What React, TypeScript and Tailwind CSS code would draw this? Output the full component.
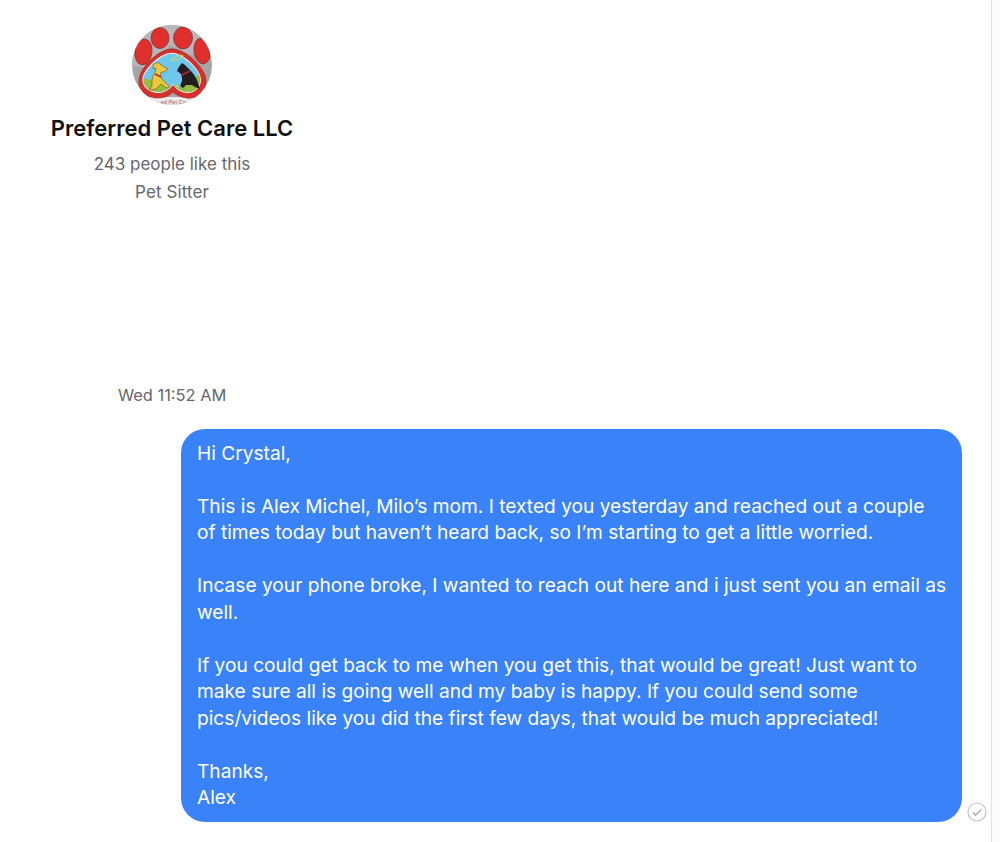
const PawLogo = () => (
  <svg viewBox="0 0 80 80" className="w-20 h-20 block">
    <defs>
      <clipPath id="logoClip">
        <circle cx="40" cy="40" r="40" />
      </clipPath>
      <clipPath id="heartClip">
        <path d="M38 29C48 27 63 41 67 50C71 60 63 68 54 67C48 66 44 63 41 59C38 63 33 67 27 67C17 67 9 60 12 51C16 42 29 30 38 29Z" />
      </clipPath>
    </defs>
    <g clipPath="url(#logoClip)">
      <rect width="80" height="80" fill="#a5a5a7" />
      <path d="M0 0H80V24L58 30L38 20L16 44L0 40Z" fill="#b7b7b9" />
      <rect y="72" width="80" height="8" fill="#eeeaea" />
      <g fill="#e0302e" stroke="#7d3030" strokeWidth="0.7">
        <ellipse cx="11.5" cy="27" rx="8.5" ry="13" transform="rotate(8 11.5 27)" />
        <ellipse cx="28" cy="13" rx="9" ry="10.5" />
        <ellipse cx="51" cy="13" rx="9.5" ry="11" />
        <ellipse cx="70" cy="26" rx="8" ry="13" transform="rotate(-8 70 26)" />
      </g>
      <path d="M38 24C50 22 68 38 73 50C78 65 65 75 54 73C48 72 44 70 41 67C38 70 33 73 27 73C15 74 3 64 8 50C12 39 27 25 38 24Z" fill="#d72f2b" stroke="#8f2a28" strokeWidth="0.5" />
      <path d="M38 28C48 26 64 40 68 50C72 61 63 69 54 68C48 67 44 64 41 60C38 64 33 68 27 68C17 68 8 61 11 51C15 41 28 29 38 28Z" fill="#f3efe4" />
      <g clipPath="url(#heartClip)">
        <rect width="80" height="80" fill="#70c7ee" />
        <path d="M12 54C22 54 33 58 39 66L22 70L8 64Z" fill="#93bd40" />
        <path d="M68 48C62 56 50 60 43 66L58 70L72 60Z" fill="#93bd40" />
      </g>
      <path d="M21 40C24 37 28 37 29 40L36 44L32 47L29 47C28 51 29 54 33 57L38 62L35 63L29 59L24 64L17 65L20 61L20 55C20 51 24 47 24 43L21 44Z" fill="#ecc93c" stroke="#6d5119" strokeWidth="0.6" />
      <path d="M23 49L29 52" stroke="#c0272d" strokeWidth="1.4" />
      <path d="M50 38L53 40C56 43 62 48 65 55L68 64L63 62L60 60L54 60L51 63L48 61L50 56C50 52 50 50 48 48L45 46C46 43 48 40 50 38Z" fill="#221e1f" />
      <path d="M50 50L58 46" stroke="#c0272d" strokeWidth="1.5" />
      <circle cx="45" cy="61" r="1.6" fill="#dbe23a" stroke="#6b7a1d" strokeWidth="0.3" />
      <ellipse cx="45" cy="33" rx="6.5" ry="1.8" fill="none" stroke="#cfe04a" strokeWidth="0.9" transform="rotate(-20 45 33)" />
      <text x="41" y="78.5" textAnchor="middle" fontSize="5.5" fontWeight="700" fill="#b98080" fontFamily="'Liberation Sans', sans-serif">
        ed Pet Ca
      </text>
    </g>
  </svg>
);

const SentCheck = () => (
  <svg viewBox="0 0 20 20" className="w-5 h-5 block">
    <circle cx="10" cy="10" r="9" fill="none" stroke="#c4c4c4" strokeWidth="1.2" />
    <path d="M5.8 10.4L8.7 13L14.4 7.4" fill="none" stroke="#a2a2a2" strokeWidth="1.3" />
  </svg>
);

const App = () => {
  return (
    <div className="w-[1000px] h-[842px] overflow-hidden bg-white font-['Inter',sans-serif] flex">
      <main className="w-[991px] flex flex-col">
        <section className="w-[344px] pt-[25px] flex flex-col items-center">
          <PawLogo />
          <h1 className="mt-[8px] text-[22px] leading-[30px] font-semibold text-[#111111]">
            Preferred Pet Care LLC
          </h1>
          <p className="mt-[7px] text-[17px] leading-[28px] text-[#65676b]">243 people like this</p>
          <p className="text-[17px] tracking-[0.1px] leading-[28px] text-[#65676b]">Pet Sitter</p>
        </section>
        <p className="mt-[179px] ml-[118px] text-[16.4px] leading-5 text-[#65676b]">Wed 11:52 AM</p>
        <div className="mt-6 ml-[181px] flex items-end gap-[5px]">
          <div className="w-[781px] h-[393px] rounded-[24px] bg-[#3a82f7] pl-4 pr-[15px] pt-[10.75px] text-[19.15px] leading-[26.5px] text-white">
            <p>Hi Crystal,</p>
            <p className="mt-[26.5px]">
              This is Alex Michel, Milo’s mom. I texted you yesterday and reached out a couple of times today but
              haven’t heard back, so I’m starting to get a little worried.
            </p>
            <p className="mt-[26.5px]">
              Incase your phone broke, I wanted to reach out here and i just sent you an email as well.
            </p>
            <p className="mt-[26.5px]">
              If you could get back to me when you get this, that would be great! Just want to make sure all is going
              well and my baby is happy. If you could send some pics/videos like you did the first few days, that
              would be much appreciated!
            </p>
            <p className="mt-[26.5px]">Thanks,</p>
            <p>Alex</p>
          </div>
          <SentCheck />
        </div>
      </main>
      <aside className="w-[9px] h-full bg-[#fcfcfc] border-l border-[#e3e3e3]" />
    </div>
  );
};

export default App;
